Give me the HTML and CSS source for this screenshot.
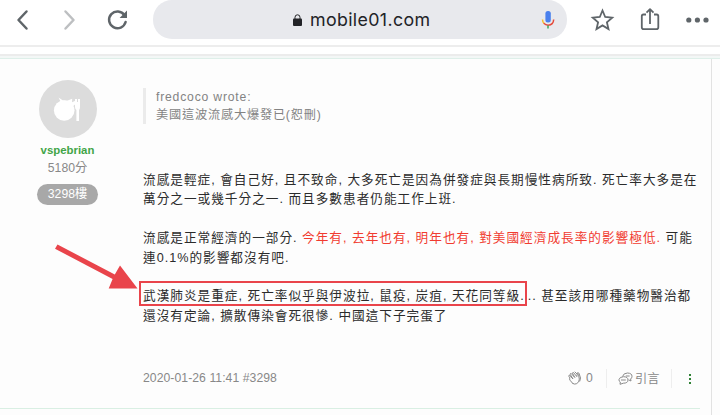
FILE: index.html
```html
<!DOCTYPE html>
<html lang="zh-Hant">
<head>
<meta charset="utf-8">
<title>mobile01.com</title>
<link rel="stylesheet" href="styles.css">
</head>
<body>
<header class="toolbar">
  <svg class="nav" viewBox="0 0 150 40" fill="none" stroke="#5f6569" stroke-width="2.5" stroke-linecap="round" stroke-linejoin="round">
    <path d="M26.5 11.5 18.5 20l8 8.5"/>
    <path stroke="#bdbfc1" d="M65.5 11.5 73.500 20l-8 8.500"/>
    <path d="M124.500 15.200A8.400 8.400 0 1 0 125.600 22"/>
    <path d="M127 10.500v7.400h-7.400Z" fill="#5f6569" stroke="none"/>
  </svg>
  <div class="address">
    <svg class="lock" viewBox="0 0 9 13"><rect y="4.500" width="9" height="7.500" rx="1" fill="#222327"/><path d="M2 5V3.300a2.500 2.500 0 0 1 5 0V5" fill="none" stroke="#222327"/></svg>
    <span class="host">mobile01.com</span>
    <svg class="mic" viewBox="0 0 14 18" fill="none" stroke-width="1.500">
      <rect x="4.400" y="0" width="5.400" height="11.500" rx="2.500" fill="#4a80ed"/>
      <path stroke="#f6bd2c" d="M1.500 8.500q0 2.500 1.600 4"/>
      <path stroke="#e44a3b" d="M2.800 12.300q1.800 1.900 4.300 1.900 5.300-.3 5.600-5.700"/>
      <path stroke="#38a85a" d="M7 14.500V17.500"/>
    </svg>
  </div>
  <svg class="actions" viewBox="0 0 130 40" fill="none" stroke="#5f6569" stroke-width="1.800">
    <path stroke-linejoin="miter" d="m12.500 10.500 2.700 6.500 7 .6-5.300 4.600 1.600 6.900-6-3.700-6 3.700 1.600-6.900-5.300-4.600 7-.6Z"/>
    <path stroke-linejoin="round" d="M56 14.500h-2.500q-1.700 0-1.700 1.700v11q0 1.900 1.900 1.900h12.700q1.900 0 1.900-1.900v-11q0-1.700-1.700-1.700H64M60 24V9.500M56.500 12.700 60 9.200l3.500 3.500"/>
    <g fill="#5f6569" stroke="none"><circle cx="98.800" cy="20" r="2.600"/><circle cx="107.400" cy="20" r="2.600"/><circle cx="116" cy="20" r="2.600"/></g>
  </svg>
</header>
<div class="divider"></div>
<main class="page">
  <article class="post">
    <aside class="author">
      <svg class="avatar" viewBox="0 0 58 58">
        <circle cx="29" cy="29" r="29" fill="#dcdcdc"/>
        <circle cx="25.200" cy="30.500" r="10.300" fill="#fff"/>
        <path fill="#fff" d="M19.500 17.500l4.500 3 4 .2 5.200-2-.2 3.500 4.500-2v3l-3.500 3-11-2Z"/>
        <path fill="#fff" d="M36 19h2v3h1v-3h2v8q0 2-1 3v11h-2.600V30q-1.400-1-1.400-3Z"/>
      </svg>
      <strong class="name">vspebrian</strong>
      <span class="score">5180分</span>
      <span class="floor">3298樓</span>
    </aside>
    <section class="content">
      <blockquote class="quote">
        <div class="wrote">fredcoco wrote:</div>
        <div>美國這波流感大爆發已(恕刪)</div>
      </blockquote>
      <div class="body">
        <p><span>流感是輕症, 會自己好, 且不致命, 大多死亡是因為併發症與長期慢性病所致. 死亡率大多是在</span><br><span>萬分之一或幾千分之一. 而且多數患者仍能工作上班.</span></p>
        <p><span>流感是正常經濟的一部分. <em>今年有, 去年也有, 明年也有, 對美國經濟成長率的影響極低.</em> 可能</span><br><span>連0.1%的影響都沒有吧.</span></p>
        <p><span class="marked">武漢肺炎是重症, 死亡率似乎與伊波拉, 鼠疫, 炭疽, 天花同等級<span class="stop">.</span>.. 甚至該用哪種藥物醫治都<i class="frame"></i>
          <svg class="arrow" viewBox="0 0 84 48"><path fill="#e9444b" d="M2.500 -.5 59.800 29.500 65 20.500 82.500 43.500 53.700 43.500 57.600 34 0 3.700Z"/></svg></span><br><span>還沒有定論, 擴散傳染會死很慘. 中國這下子完蛋了</span></p>
      </div>
      <footer class="meta">
        <span class="date">2020-01-26 11:41 #3298</span>
        <span class="clap"><svg viewBox="0 0 14 14" fill="none" stroke="#8a8a8a" stroke-linecap="round" stroke-linejoin="round"><path d="M4.800 12.500 2 9.200Q1 7.700 2 7L.8 5.200q-.2-1 .8-1L5 8 2.200 3.400q0-1.100 1-.9L6.800 6.500 4.400 2.200q.2-1 1.200-.6l3.200 4 .3-2.200q.9-.8 1.500.4l.7 4.400q.2 3.200-3 4.600-2 .8-3.500-.3M7 1l2 2 .5-1.300 1.500.5L12.500 7l-.7 3"/></svg>0</span>
        <span class="reply"><svg viewBox="0 0 15 13" fill="none" stroke="#8a8a8a" stroke-linejoin="round"><path d="M4.500 4.500Q5.500 1 9.500 1q4.500.2 4.500 3.300 0 1.700-1.400 2.700l.4 2-2.300-1.100M5.500 4.700Q10 4.800 10 8q0 3.200-4.700 3.200L2 12.300 2.300 10Q.7 9.200 1 7.500q.5-2.600 4.500-2.800ZM3 8h4.800M7.800 4h3.800"/></svg>引言</span>
        <span class="more"><i></i><i></i><i></i></span>
      </footer>
    </section>
  </article>
</main>
</body>
</html>
```
FILE: styles.css
```css
* { box-sizing: border-box; }
body {
  margin: 0;
  width: 720px;
  height: 415px;
  overflow: hidden;
  background: #fdfdfd;
  font-family: "Liberation Sans", "Noto Sans CJK TC", sans-serif;
}
svg { display: block; flex: none; }
.toolbar {
  display: flex;
  height: 47px;
  background: #fff;
  border-bottom: 2px solid #ededed;
}
.nav { width: 150px; height: 40px; }
.address {
  display: flex;
  align-items: center;
  margin-left: 3px;
  width: 414px;
  height: 39px;
  padding: 1px 12px 0 140px;
  background: #e8e9ed;
  border-radius: 19px;
}
.lock { width: 9px; height: 13px; }
.host {
  margin-left: 8px;
  font: 17.8px/20px Inter, sans-serif;
  letter-spacing: .36px;
  color: #222327;
  white-space: nowrap;
}
.mic { width: 14px; height: 18px; margin-left: auto; }
.actions { width: 130px; height: 40px; margin-left: 23px; }
.divider {
  height: 12px;
  background: linear-gradient(#fff 0 7px, #ececec 7px 9px, #f3f7f6 9px 11px, #deefe9 11px);
}
.page { width: 712px; height: 356px; border-right: 1px solid #e2e2e2; }
.post {
  display: grid;
  grid-template-columns: 143px 557px;
  width: 700px;
  height: 350px;
  border-bottom: 1px solid #d9efe3;
}
.author {
  display: flex;
  flex-direction: column;
  align-items: center;
  width: 135px;
  padding-top: 21px;
}
.avatar { width: 58px; height: 58px; }
.name { margin-top: 4px; font-size: 11.4px; line-height: 17px; color: #42a548; }
.score { margin-top: 1px; font-size: 12.2px; line-height: 17px; color: #888; }
.floor {
  margin-top: 7px;
  width: 61px;
  height: 21px;
  border-radius: 11px;
  background: #a8a8a8;
  color: #fff;
  font-size: 12.2px;
  line-height: 21px;
  text-align: center;
}
.content { padding-top: 29px; }
.quote {
  margin: 0;
  padding-left: 10px;
  height: 36px;
  border-left: 3px solid #ebebeb;
  color: #838383;
  font-size: 12.2px;
  line-height: 18px;
  letter-spacing: .8px;
}
.body { margin-top: 47px; color: #2b2b2b; font-size: 12.65px; line-height: 19.4px; letter-spacing: 1px; white-space: nowrap; }
.body p { margin: 0 0 19.4px; }
.body em { font-style: normal; color: #f13b30; }
.marked { position: relative; }
.stop { letter-spacing: 4px; }
.frame {
  position: absolute;
  left: -4px;
  top: -8px;
  width: 388px;
  height: 25px;
  border: 2px solid #e9444b;
}
.arrow { position: absolute; left: -88px; top: -44px; width: 84px; height: 48px; overflow: visible; }
.meta {
  display: flex;
  align-items: center;
  height: 20px;
  margin-top: 42px;
  color: #888;
  font-size: 12.2px;
}
.date { width: 425px; letter-spacing: .06px; }
.clap { display: flex; align-items: center; width: 39px; gap: 4px; border-right: 1px solid #eee; height: 19px; }
.clap svg { width: 14px; height: 14px; }
.reply { display: flex; align-items: center; width: 65px; padding-left: 11px; gap: 2px; height: 19px; border-right: 1px solid #eee; }
.reply svg { width: 15px; height: 13px; }
.more { display: flex; flex-direction: column; gap: 2px; margin: 2px 0 0 17px; }
.more i { width: 2px; height: 2px; background: #2f8235; }
```
